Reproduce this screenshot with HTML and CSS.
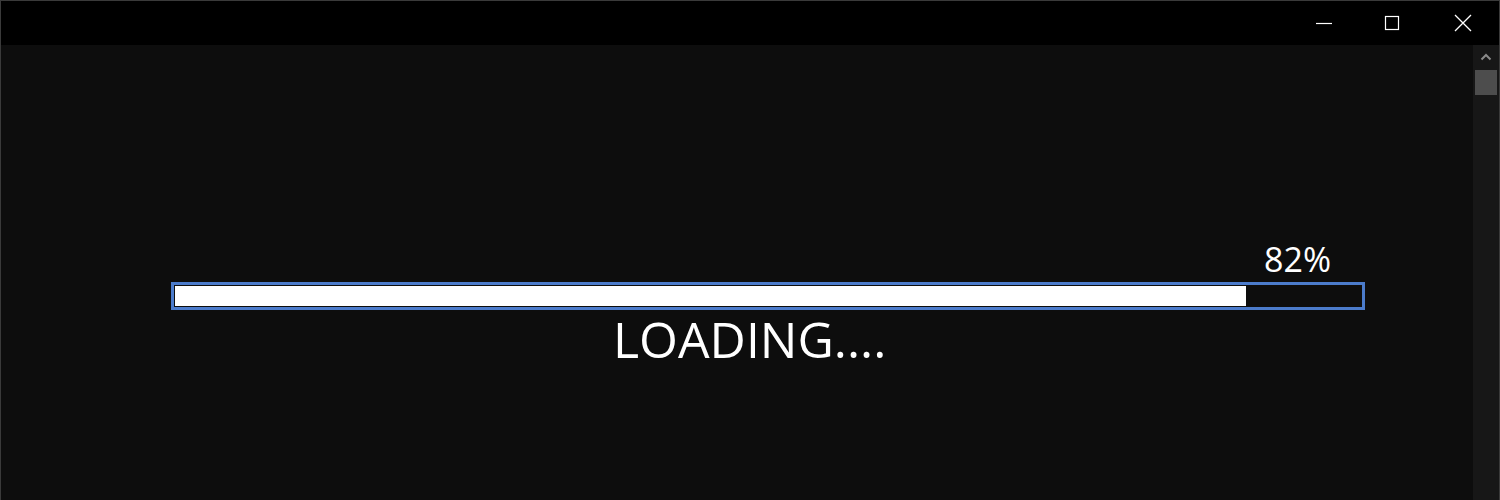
FILE: index.html
```html
<!DOCTYPE html>
<html>
<head>
<meta charset="utf-8">
<link rel="stylesheet" href="styles.css">
</head>
<body>
<div class="window">
  <div class="titlebar">
    <div class="tb-btn tb-min">
      <svg width="16" height="16" viewBox="0 0 16 16"><path d="M0 8.5H16" stroke="#fff" stroke-width="1.2" fill="none"/></svg>
    </div>
    <div class="tb-btn tb-max">
      <svg width="16" height="16" viewBox="0 0 16 16"><rect x="1.5" y="1.5" width="13" height="13" stroke="#fff" stroke-width="1.2" fill="none"/></svg>
    </div>
    <div class="tb-btn tb-close">
      <svg width="18" height="18" viewBox="0 0 18 18"><path d="M1 1L17 17M17 1L1 17" stroke="#fff" stroke-width="1.3" fill="none"/></svg>
    </div>
  </div>
  <div class="body">
    <div class="content">
      <div class="percent-row"><span class="percent">82%</span></div>
      <div class="bar"><div class="fill" style="width: 1071px"></div></div>
      <div class="loading">LOADING....</div>
    </div>
    <div class="scrollbar">
      <div class="arrow">
        <svg width="12" height="8" viewBox="0 0 12 8"><path d="M1.5 6.5L6 2L10.5 6.5" stroke="#8a8a8a" stroke-width="2" fill="none"/></svg>
      </div>
      <div class="thumb"></div>
    </div>
  </div>
</div>
</body>
</html>
```
FILE: styles.css
```css
html, body {
  margin: 0;
  padding: 0;
  background: #0d0d0d;
}
body {
  font-family: "Open Sans", "Noto Sans", sans-serif;
  color: #fff;
}
.window {
  width: 1500px;
  height: 500px;
  box-sizing: border-box;
  border: 1px solid #3a3a3a;
  border-bottom: none;
  display: flex;
  flex-direction: column;
  overflow: hidden;
}
.titlebar {
  height: 44px;
  background: #000;
  display: flex;
  justify-content: flex-end;
  flex-shrink: 0;
}
.tb-btn {
  display: flex;
  align-items: center;
  justify-content: center;
}
.tb-min {
  width: 66px;
}
.tb-max {
  width: 70px;
}
.tb-close {
  width: 72px;
}
.body {
  flex: 1;
  display: flex;
  background: #0d0d0d;
}
.content {
  flex: 1;
  padding-left: 170px;
  padding-top: 197px;
}
.percent-row {
  width: 1194px;
  box-sizing: border-box;
  padding-right: 34px;
  text-align: right;
  margin-bottom: 5px;
}
.percent {
  font-size: 34px;
  line-height: 34px;
  display: inline-block;
  height: 34px;
  font-weight: 500;
}
.bar {
  width: 1194px;
  height: 28px;
  box-sizing: border-box;
  border: 3px solid #4b7bcb;
  padding: 1px;
  background: #0d0d0d;
}
.fill {
  height: 100%;
  background: #fff;
}
.loading {
  margin-top: 4px;
  padding-left: 442px;
  font-size: 50px;
  line-height: 50px;
  font-weight: 500;
}
.scrollbar {
  width: 26px;
  background: #171717;
  display: flex;
  flex-direction: column;
  align-items: center;
}
.arrow {
  height: 24px;
  display: flex;
  align-items: center;
  justify-content: center;
  width: 100%;
}
.thumb {
  width: 22px;
  height: 25px;
  background: #4d4d4d;
  margin-top: 1px;
}
```
